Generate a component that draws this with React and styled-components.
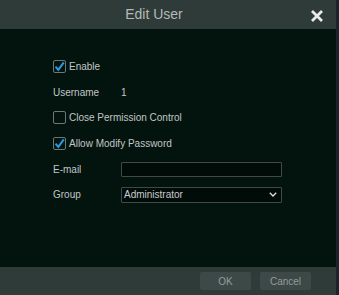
import styled, { createGlobalStyle } from 'styled-components';

const GlobalStyle = createGlobalStyle`
  html, body {
    margin: 0;
    padding: 0;
    background: #1a222a;
  }
`;

const Dialog = styled.div`
  width: 336px;
  height: 295px;
  border-right: 3px solid #1a222a;
  display: flex;
  flex-direction: column;
  font-family: 'Liberation Sans', Arial, sans-serif;
  background: #03140f;
`;

const Header = styled.div`
  height: 29px;
  flex: none;
  background: #2f3b38;
  display: flex;
  align-items: center;
  position: relative;
`;

const Title = styled.div`
  flex: 1;
  text-align: center;
  padding-right: 28px;
  font-size: 14px;
  color: #b4b9b8;
  line-height: 29px;
`;

const Close = styled.div`
  position: absolute;
  right: 12px;
  top: 9px;
  width: 14px;
  height: 14px;
`;

const Body = styled.div`
  flex: 1;
  padding: 25px 0 0 53px;
  display: flex;
  flex-direction: column;
`;

const Row = styled.div`
  height: 25.6px;
  display: flex;
  align-items: center;
  font-size: 10px;
  color: #c2c6c5;
`;

const Label = styled.div`
  width: 68px;
  flex: none;
`;

const Box = styled.span`
  width: 11px;
  height: 11px;
  border: 1px solid #6b7876;
  border-radius: 2px;
  margin-right: 3px;
  display: flex;
  align-items: center;
  justify-content: center;
`;

const Field = styled.div`
  width: 161px;
  height: ${(p) => p.h}px;
  border: 1px solid #404b48;
  border-radius: 1px;
  background: #010b08;
  display: flex;
  align-items: center;
  justify-content: space-between;
  padding: 0 4px 0 2px;
  box-sizing: border-box;
  color: #c8cccb;
`;

const Footer = styled.div`
  height: 28px;
  flex: none;
  background: #2f3b38;
  display: flex;
  align-items: center;
  justify-content: flex-end;
  gap: 9px;
  padding-right: 25px;
`;

const Button = styled.div`
  width: 51px;
  height: 18px;
  border-radius: 2px;
  background: #3c4946;
  color: #949c9a;
  font-size: 10px;
  display: flex;
  align-items: center;
  justify-content: center;
`;

const Check = ({ on }) => (
  <Box>
    {on && (
      <svg width="11" height="11" viewBox="0 0 11 11">
        <path d="M1.5 5.6 L4.3 8.9 L9.8 1.3" fill="none" stroke="#2a9be0" strokeWidth="2" />
      </svg>
    )}
  </Box>
);

export default function App() {
  return (
    <>
      <GlobalStyle />
      <Dialog>
        <Header>
          <Title>Edit User</Title>
          <Close>
            <svg width="14" height="14" viewBox="0 0 14 14">
              <path d="M2 2 L12 12 M12 2 L2 12" stroke="#e8ebea" strokeWidth="2.8" />
            </svg>
          </Close>
        </Header>
        <Body>
          <Row>
            <Check on />
            Enable
          </Row>
          <Row>
            <Label>Username</Label>1
          </Row>
          <Row>
            <Check />
            Close Permission Control
          </Row>
          <Row>
            <Check on />
            Allow Modify Password
          </Row>
          <Row>
            <Label>E-mail</Label>
            <Field h={15} />
          </Row>
          <Row>
            <Label>Group</Label>
            <Field h={16}>
              Administrator
              <svg width="8" height="5" viewBox="0 0 8 5">
                <path d="M0.8 0.8 L4 4 L7.2 0.8" fill="none" stroke="#e0e3e2" strokeWidth="1.3" />
              </svg>
            </Field>
          </Row>
        </Body>
        <Footer>
          <Button>OK</Button>
          <Button>Cancel</Button>
        </Footer>
      </Dialog>
    </>
  );
}
